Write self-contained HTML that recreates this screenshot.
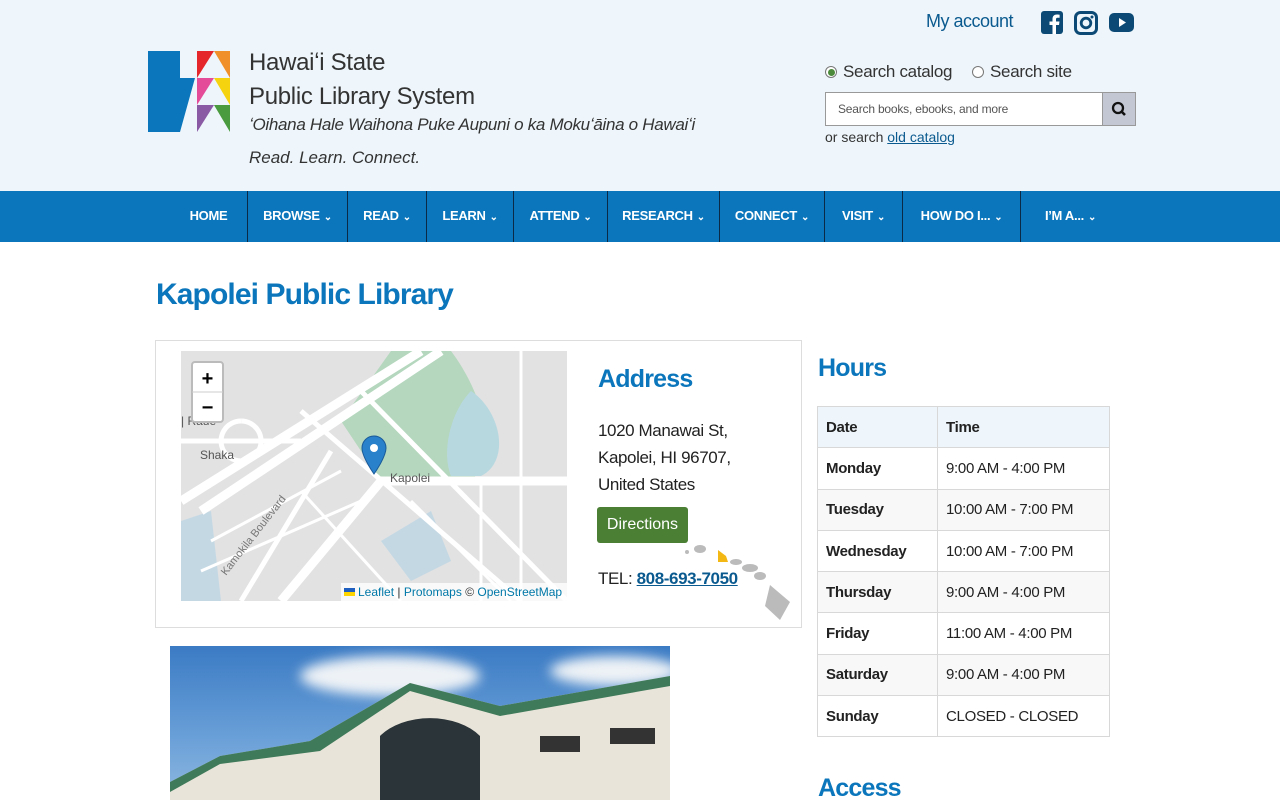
<!DOCTYPE html>
<html><head><meta charset="utf-8"><style>
*{box-sizing:border-box;margin:0;padding:0}
body{width:1280px;height:800px;overflow:hidden;background:#fff;font-family:"Liberation Sans",sans-serif;color:#222;position:relative}
.hdr{position:absolute;left:0;top:0;width:1280px;height:191px;background:#eef6fb}
.abs{position:absolute}
.nav{position:absolute;left:0;top:191px;width:1280px;height:51px;background:#0b76bb}
.nav div{position:absolute;top:0;height:51px;line-height:49px;text-align:center;color:#fff;font-weight:bold;font-size:13px;border-left:1px solid #0a2a45;letter-spacing:-0.3px}
.nav div span{font-size:10px;margin-left:4px}
a{color:#0b5a8f}
table{border-collapse:collapse}
td{border:1px solid #d8d8d8;height:41.3px;padding:0 8px;font-size:15px;letter-spacing:-0.3px}
</style></head><body>
<div class="hdr"></div>
<svg class="abs" style="left:148px;top:51px" width="82" height="82" viewBox="0 0 82 82">
<path d="M0 0H32V27H47L32 81H0Z" fill="#0b76bb"/>
<polygon points="49,0 66,0 49,27" fill="#e5262b"/><polygon points="66,0 82,0 82,27" fill="#f0902a"/>
<polygon points="49,27 66,27 49,54" fill="#e44c9a"/><polygon points="66,27 82,27 82,54" fill="#f5d30f"/>
<polygon points="49,54 66,54 49,81" fill="#8a5aa5"/><polygon points="66,54 82,54 82,81" fill="#4a9a3f"/>
</svg>
<div class="abs" style="left:249px;top:46px;font-size:24px;line-height:34px;color:#333;letter-spacing:-0.3px">Hawaiʻi State<br>Public Library System</div>
<div class="abs" style="left:249px;top:115px;font-size:17px;font-style:italic;color:#333;letter-spacing:-0.3px">ʻOihana Hale Waihona Puke Aupuni o ka Mokuʻāina o Hawaiʻi</div>
<div class="abs" style="left:249px;top:148px;font-size:17px;font-style:italic;color:#333">Read. Learn. Connect.</div>
<a class="abs" style="left:926px;top:11px;font-size:18px;color:#0b5a8f;letter-spacing:-0.5px">My account</a>
<svg class="abs" style="left:1041px;top:11px" width="22" height="23"><rect width="22" height="23" rx="3" fill="#0c4a75"/><path d="M15 23V14h3l.5-3.5H15V8.5c0-1 .3-1.7 1.8-1.7H18.6V3.7c-.3 0-1.4-.2-2.7-.2-2.6 0-4.4 1.6-4.4 4.5v2.5h-3V14h3v9z" fill="#fff"/></svg>
<svg class="abs" style="left:1074px;top:11px" width="24" height="24"><rect x="1.5" y="1.5" width="21" height="21" rx="5" fill="none" stroke="#0c4a75" stroke-width="3"/><circle cx="12" cy="12" r="4.8" fill="none" stroke="#0c4a75" stroke-width="2.8"/><circle cx="18" cy="6" r="1.5" fill="#0c4a75"/></svg>
<svg class="abs" style="left:1109px;top:13px" width="25" height="19"><rect width="25" height="19" rx="5" fill="#0c4a75"/><polygon points="10,5 17,9.5 10,14" fill="#fff"/></svg>
<div class="abs" style="left:825px;top:66px;width:12px;height:12px;border-radius:50%;border:1px solid #777;background:#fff"><div style="margin:1.5px;width:7px;height:7px;border-radius:50%;background:#4a8a3a"></div></div>
<div class="abs" style="left:843px;top:62px;font-size:17px;color:#333;letter-spacing:-0.3px">Search catalog</div>
<div class="abs" style="left:972px;top:66px;width:12px;height:12px;border-radius:50%;border:1px solid #777;background:#fff"></div>
<div class="abs" style="left:990px;top:62px;font-size:17px;color:#333;letter-spacing:-0.3px">Search site</div>
<div class="abs" style="left:825px;top:92px;width:278px;height:34px;background:#fff;border:1px solid #999;font-size:12px;color:#555;padding:9px 12px;letter-spacing:-0.2px">Search books, ebooks, and more</div>
<div class="abs" style="left:1102px;top:92px;width:34px;height:34px;background:#c3c7d3;border:1px solid #999"><svg width="32" height="32"><circle cx="15" cy="15" r="5" fill="none" stroke="#111" stroke-width="2.3"/><line x1="18.5" y1="18.5" x2="22" y2="22" stroke="#111" stroke-width="2.6"/></svg></div>
<div class="abs" style="left:825px;top:129px;font-size:14px;color:#333">or search <a style="text-decoration:underline">old catalog</a></div>
<div class="nav">
<div style="left:170px;width:77px;border:0">HOME</div>
<div style="left:247px;width:100px">BROWSE<span>⌄</span></div>
<div style="left:347px;width:79px">READ<span>⌄</span></div>
<div style="left:426px;width:87px">LEARN<span>⌄</span></div>
<div style="left:513px;width:94px">ATTEND<span>⌄</span></div>
<div style="left:607px;width:112px">RESEARCH<span>⌄</span></div>
<div style="left:719px;width:105px">CONNECT<span>⌄</span></div>
<div style="left:824px;width:78px">VISIT<span>⌄</span></div>
<div style="left:902px;width:118px">HOW DO I...<span>⌄</span></div>
<div style="left:1020px;width:100px">I’M A...<span>⌄</span></div>
</div>
<div class="abs" style="left:156px;top:278px;font-size:30px;font-weight:bold;color:#0b76bb;letter-spacing:-0.9px">Kapolei Public Library</div>
<div class="abs" style="left:155px;top:340px;width:647px;height:288px;border:1px solid #ddd"></div>
<svg class="abs" style="left:181px;top:351px" width="386" height="250" viewBox="0 0 386 250">
<rect width="386" height="250" fill="#e2e2e2"/>
<path d="M270 0C300 40 320 100 290 130H200L160 70 210 0Z" fill="#a9d5b4" opacity=".8"/>
<path d="M290 40C320 60 330 110 300 125H270C260 100 270 60 290 40Z" fill="#b8d8e0"/>
<path d="M200 190L250 160 270 210 230 230Z" fill="#c4d8e4"/>
<path d="M0 170L30 160 40 250H0Z" fill="#c4d8e4"/>
<g stroke="#fff" fill="none">
<path d="M0 150L240 0M20 160L260 0M100 250L200 130H386" stroke-width="9"/>
<path d="M60 250L150 100M0 90H120M120 60L340 250M180 40L386 250M60 70a20 20 0 1 0 .1 0" stroke-width="5"/>
<path d="M30 190L160 120M20 220L180 150M120 140L220 250M230 150L330 250M300 130V250M340 0V250" stroke-width="3"/>
</g>
<path d="M193 85a12 12 0 0 0-12 12c0 9 12 26 12 26s12-17 12-26a12 12 0 0 0-12-12z" fill="#2a81cb" stroke="#1a5a99"/><circle cx="193" cy="97" r="4" fill="#fff"/>
<text x="209" y="131" font-size="12" fill="#555" font-family="Liberation Sans">Kapolei</text>
<text x="19" y="108" font-size="12" fill="#555" font-family="Liberation Sans">Shaka</text>
<text x="0" y="74" font-size="12" fill="#555" font-family="Liberation Sans">| Raue</text>
<text x="45" y="225" font-size="11" fill="#777" transform="rotate(-52 45 225)" font-family="Liberation Sans">Kamokila Boulevard</text>
<rect x="160" y="232" width="226" height="18" fill="#fff" opacity=".8"/>
<rect x="163" y="237" width="11" height="4" fill="#1f5fbf"/><rect x="163" y="241" width="11" height="4" fill="#ffd500"/>
<text x="177" y="245" font-size="12" fill="#333" font-family="Liberation Sans"><tspan fill="#0078a8">Leaflet</tspan> | <tspan fill="#0078a8">Protomaps</tspan> © <tspan fill="#0078a8">OpenStreetMap</tspan></text>
<rect x="11" y="11" width="31" height="60" rx="3" fill="#fff" stroke="#bbb" stroke-width="2"/><line x1="11" y1="41" x2="42" y2="41" stroke="#ccc"/>
<text x="26.5" y="34" font-size="20" text-anchor="middle" font-weight="bold" fill="#000">+</text>
<text x="26.5" y="63" font-size="20" text-anchor="middle" font-weight="bold" fill="#000">−</text>
</svg>
<div class="abs" style="left:598px;top:365px;font-size:25px;font-weight:bold;color:#0b76bb;letter-spacing:-0.8px">Address</div>
<div class="abs" style="left:598px;top:417px;font-size:17px;line-height:27px;color:#222;letter-spacing:-0.4px">1020 Manawai St,<br>Kapolei, HI 96707,<br>United States</div>
<div class="abs" style="left:597px;top:507px;width:91px;height:36px;background:#4a7f34;border-radius:3px;color:#fff;font-size:16px;line-height:36px;text-align:center">Directions</div>
<svg class="abs" style="left:680px;top:540px" width="115" height="82"><g fill="#bbb"><circle cx="7" cy="12" r="2"/><ellipse cx="20" cy="9" rx="6" ry="4"/><ellipse cx="56" cy="22" rx="6" ry="3"/><ellipse cx="70" cy="28" rx="8" ry="4"/><ellipse cx="80" cy="36" rx="6" ry="4"/><path d="M90 45L110 62 100 80 85 66Z"/></g><path d="M38 10L46 16 48 22 38 22Z" fill="#f3b814"/></svg>
<div class="abs" style="left:598px;top:569px;font-size:17px;color:#222;letter-spacing:-0.4px">TEL: <a style="font-weight:bold;color:#0b5a8f;text-decoration:underline">808-693-7050</a></div>
<div class="abs" style="left:170px;top:646px;width:500px;height:154px;background:linear-gradient(#3b7bc4,#6aa0d8 60%,#8fb8e0);overflow:hidden">
<div class="abs" style="left:130px;top:10px;width:180px;height:40px;background:#eef2f6;border-radius:50%;filter:blur(6px)"></div>
<div class="abs" style="left:380px;top:10px;width:130px;height:30px;background:#eef2f6;border-radius:50%;filter:blur(6px)"></div>
<svg width="500" height="154" class="abs" style="left:0;top:0"><path d="M0 136L50 110 140 95 240 37 330 60 500 30V154H0Z" fill="#e9e4da"/><path d="M0 136L50 110 140 95 240 37 330 60 500 30 500 40 330 70 240 45 150 105 50 118 0 146Z" fill="#3f7a5a"/><path d="M210 154V90a60 40 0 0 1 100 0V154Z" fill="#2b3438"/><rect x="370" y="90" width="40" height="16" fill="#333"/><rect x="440" y="82" width="45" height="16" fill="#333"/></svg>
</div>
<div class="abs" style="left:818px;top:354px;font-size:25px;font-weight:bold;color:#0b76bb;letter-spacing:-0.8px">Hours</div>
<table class="abs" style="left:817px;top:406px;width:293px">
<tr style="background:#eef6fb;font-weight:bold"><td style="width:120px">Date</td><td>Time</td></tr>
<tr><td><b>Monday</b></td><td>9:00 AM - 4:00 PM</td></tr>
<tr style="background:#f8f8f8"><td><b>Tuesday</b></td><td>10:00 AM - 7:00 PM</td></tr>
<tr><td><b>Wednesday</b></td><td>10:00 AM - 7:00 PM</td></tr>
<tr style="background:#f8f8f8"><td><b>Thursday</b></td><td>9:00 AM - 4:00 PM</td></tr>
<tr><td><b>Friday</b></td><td>11:00 AM - 4:00 PM</td></tr>
<tr style="background:#f8f8f8"><td><b>Saturday</b></td><td>9:00 AM - 4:00 PM</td></tr>
<tr><td><b>Sunday</b></td><td>CLOSED - CLOSED</td></tr>
</table>
<div class="abs" style="left:818px;top:774px;font-size:25px;font-weight:bold;color:#0b76bb;letter-spacing:-0.8px">Access</div>
</body></html>
